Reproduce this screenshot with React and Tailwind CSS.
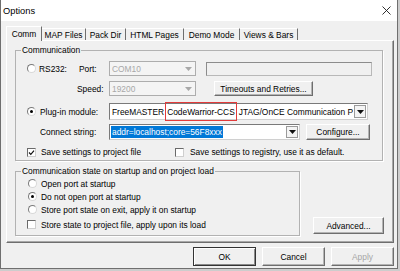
function Radio({ on }) {
  return (
    <span className="w-[9px] h-[9px] shrink-0 rounded-full border border-t-[#7a7a7a] border-l-[#7a7a7a] border-r-[#d8d8d8] border-b-[#d8d8d8] bg-white flex items-center justify-center">
      {on && <span className="w-[3px] h-[3px] rounded-full bg-black" />}
    </span>
  );
}

function Check({ on }) {
  return (
    <span className="w-[9px] h-[9px] shrink-0 border border-t-[#6a6a6a] border-l-[#6a6a6a] border-r-[#cfcfcf] border-b-[#cfcfcf] bg-white flex items-center justify-center">
      {on && (
        <svg viewBox="0 0 7 7" className="w-[7px] h-[7px]">
          <path d="M1 3.5 L2.8 5.3 L6 1.6" fill="none" stroke="#111" strokeWidth="1.2" />
        </svg>
      )}
    </span>
  );
}

function Arrow({ dim }) {
  return (
    <svg viewBox="0 0 7 4" className="w-[7px] h-[4px]">
      <path d="M0 0 H7 L3.5 4 Z" fill={dim ? '#a8a8a8' : '#111'} />
    </svg>
  );
}

function Btn({ children, className = '', def = false, disabled = false }) {
  return (
    <div
      className={`flex items-center justify-center bg-[#f0f0f0] shrink-0 ${
        def
          ? 'border border-[#333] shadow-[inset_1px_1px_0_#fff,inset_-1px_-1px_0_#8a8a8a]'
          : 'border border-t-white border-l-white border-r-[#6e6e6e] border-b-[#6e6e6e] shadow-[inset_-1px_-1px_0_#b4b4b4]'
      } ${disabled ? 'text-[#a6a6a6]' : 'text-black'} ${className}`}
    >
      {children}
    </div>
  );
}

const tabs = [
  { label: 'MAP Files', w: 'w-[44px]' },
  { label: 'Pack Dir', w: 'w-[40px]' },
  { label: 'HTML Pages', w: 'w-[58px]' },
  { label: 'Demo Mode', w: 'w-[56px]' },
  { label: 'Views & Bars', w: 'w-[58px]' },
];

export default function App() {
  return (
    <div className="w-[400px] h-[271px] bg-[#cdcdcd] overflow-hidden font-['Liberation_Sans',Arial,sans-serif] text-[8.4px] leading-[10px] text-black">
      <div className="w-[398px] h-[269px] bg-[#f0f0f0] border-x border-b border-[#6f6f6f] flex flex-col">
        {/* title bar */}
        <div className="h-[21px] shrink-0 bg-white flex items-center justify-between pl-[2px] pr-[6px]">
          <span className="text-[9.3px] mt-[1px]">Options</span>
          <svg viewBox="0 0 9 9" className="w-[9px] h-[9px]">
            <path d="M0.5 0.5 L8.5 8.5 M8.5 0.5 L0.5 8.5" stroke="#1a1a1a" strokeWidth="0.9" />
          </svg>
        </div>

        {/* tabs */}
        <div className="mt-[5px] ml-[5px] h-[14px] flex items-end">
          <div className="relative z-10 -mb-[1px] h-[15px] w-[36px] bg-[#f0f0f0] border-t border-l border-t-white border-l-white border-r border-r-[#6e6e6e] flex items-center justify-center">
            Comm
          </div>
          {tabs.map((t) => (
            <div
              key={t.label}
              className={`h-[12px] ${t.w} border-t border-t-white border-r border-r-[#6e6e6e] flex items-center justify-center`}
            >
              {t.label}
            </div>
          ))}
        </div>

        {/* tab panel */}
        <div className="ml-[5px] w-[388px] h-[203px] shrink-0 border border-t-white border-l-white border-r-[#6e6e6e] border-b-[#6e6e6e] shadow-[inset_-1px_-1px_0_#a8a8a8] pl-[8px] flex flex-col">
          <fieldset className="mt-[4px] w-[368px] h-[116px] border border-[#b2b2b2] shadow-[1px_1px_0_#fff]">
            <legend className="ml-[5px] px-[1px] bg-[#f0f0f0]">Communication</legend>
            <div className="pl-[11px] flex flex-col">
              {/* RS232 / Port */}
              <div className="mt-[6px] h-[15px] flex items-center">
                <div className="w-[52px] flex items-center">
                  <Radio />
                  <span className="ml-[3px]">RS232:</span>
                </div>
                <span className="w-[30px]">Port:</span>
                <div className="w-[87px] h-[15px] border border-[#adadad] bg-[#f4f4f4] flex items-center justify-between pl-[2px] pr-[3px] text-[#a8a8a8]">
                  <span>COM10</span>
                  <Arrow dim />
                </div>
                <div className="ml-[10px] w-[166px] h-[14px] border border-[#b8b8b8] border-t-[#8c8c8c] border-l-[#8c8c8c] bg-[#f0f0f0]" />
              </div>
              {/* Speed */}
              <div className="mt-[5px] h-[15px] flex items-center">
                <div className="w-[50px]" />
                <span className="w-[32px]">Speed:</span>
                <div className="w-[87px] h-[15px] border border-[#adadad] bg-[#f4f4f4] flex items-center justify-between pl-[2px] pr-[3px] text-[#a8a8a8]">
                  <span>19200</span>
                  <Arrow dim />
                </div>
                <Btn className="ml-[18px] w-[99px] h-[15px]">Timeouts and Retries...</Btn>
              </div>
              {/* Plug-in module */}
              <div className="mt-[7px] h-[17px] flex items-center">
                <div className="w-[82px] flex items-center">
                  <Radio on />
                  <span className="ml-[4px]">Plug-in module:</span>
                </div>
                <div className="w-[259px] h-[17px] border border-t-[#7a7a7a] border-l-[#7a7a7a] border-r-[#d0d0d0] border-b-[#d0d0d0] bg-white flex items-center">
                  <div className="flex-1 min-w-0 flex items-center overflow-x-clip whitespace-nowrap pl-[2px]">
                    <span className="shrink-0">FreeMASTER</span>
                    <span className="shrink-0 ml-[1px] h-[19px] px-[1px] border border-[#e23b3b] flex items-center">CodeWarrior-CCS</span>
                    <span className="shrink-0 ml-[2px]">JTAG/OnCE Communication Plug-in</span>
                  </div>
                  <div className="w-[12px] h-[13px] mx-[1px] shrink-0 border border-[#9a9a9a] bg-[#f4f4f4] flex items-center justify-center">
                    <Arrow />
                  </div>
                </div>
              </div>
              {/* Connect string */}
              <div className="mt-[4px] h-[16px] flex items-center">
                <span className="w-[82px] pl-[13px]">Connect string:</span>
                <div className="w-[191px] h-[16px] border border-t-[#7a7a7a] border-l-[#7a7a7a] border-r-[#d0d0d0] border-b-[#d0d0d0] bg-white flex items-center justify-between pl-[1px]">
                  <span className="h-[12px] px-[1px] bg-[#0078d7] text-white flex items-center">addr=localhost;core=56F8xxx</span>
                  <div className="w-[12px] h-[12px] mr-[1px] border border-[#9a9a9a] bg-[#f4f4f4] flex items-center justify-center">
                    <Arrow />
                  </div>
                </div>
                <Btn className="ml-[6px] w-[64px] h-[16px]">Configure...</Btn>
              </div>
              {/* save checkboxes */}
              <div className="mt-[7px] h-[10px] flex items-center">
                <div className="w-[148px] flex items-center">
                  <Check on />
                  <span className="ml-[5px]">Save settings to project file</span>
                </div>
                <Check />
                <span className="ml-[6px]">Save settings to registry, use it as default.</span>
              </div>
            </div>
          </fieldset>

          <div className="mt-[5px] flex items-end">
            <fieldset className="w-[285px] h-[70px] border border-[#b2b2b2] shadow-[1px_1px_0_#fff]">
              <legend className="ml-[5px] px-[1px] bg-[#f0f0f0]">
                Communication state on startup and on project load
              </legend>
              <div className="pl-[12px] flex flex-col">
                <div className="mt-[1px] h-[13px] flex items-center">
                  <Radio />
                  <span className="ml-[4px]">Open port at startup</span>
                </div>
                <div className="h-[13px] flex items-center">
                  <Radio on />
                  <span className="ml-[4px]">Do not open port at startup</span>
                </div>
                <div className="h-[13px] flex items-center">
                  <Radio />
                  <span className="ml-[4px]">Store port state on exit, apply it on startup</span>
                </div>
                <div className="mt-[2px] h-[13px] flex items-center -ml-[1px]">
                  <Check />
                  <span className="ml-[5px]">Store state to project file, apply upon its load</span>
                </div>
              </div>
            </fieldset>
            <Btn className="ml-[13px] mb-[2px] w-[71px] h-[17px]">Advanced...</Btn>
          </div>
        </div>

        {/* dialog buttons */}
        <div className="mt-[4px] ml-[192px] flex gap-[6px]">
          <Btn def className="w-[63px] h-[19px]">OK</Btn>
          <Btn className="w-[63px] h-[19px]">Cancel</Btn>
          <Btn disabled className="w-[63px] h-[19px]">Apply</Btn>
        </div>
      </div>
    </div>
  );
}
